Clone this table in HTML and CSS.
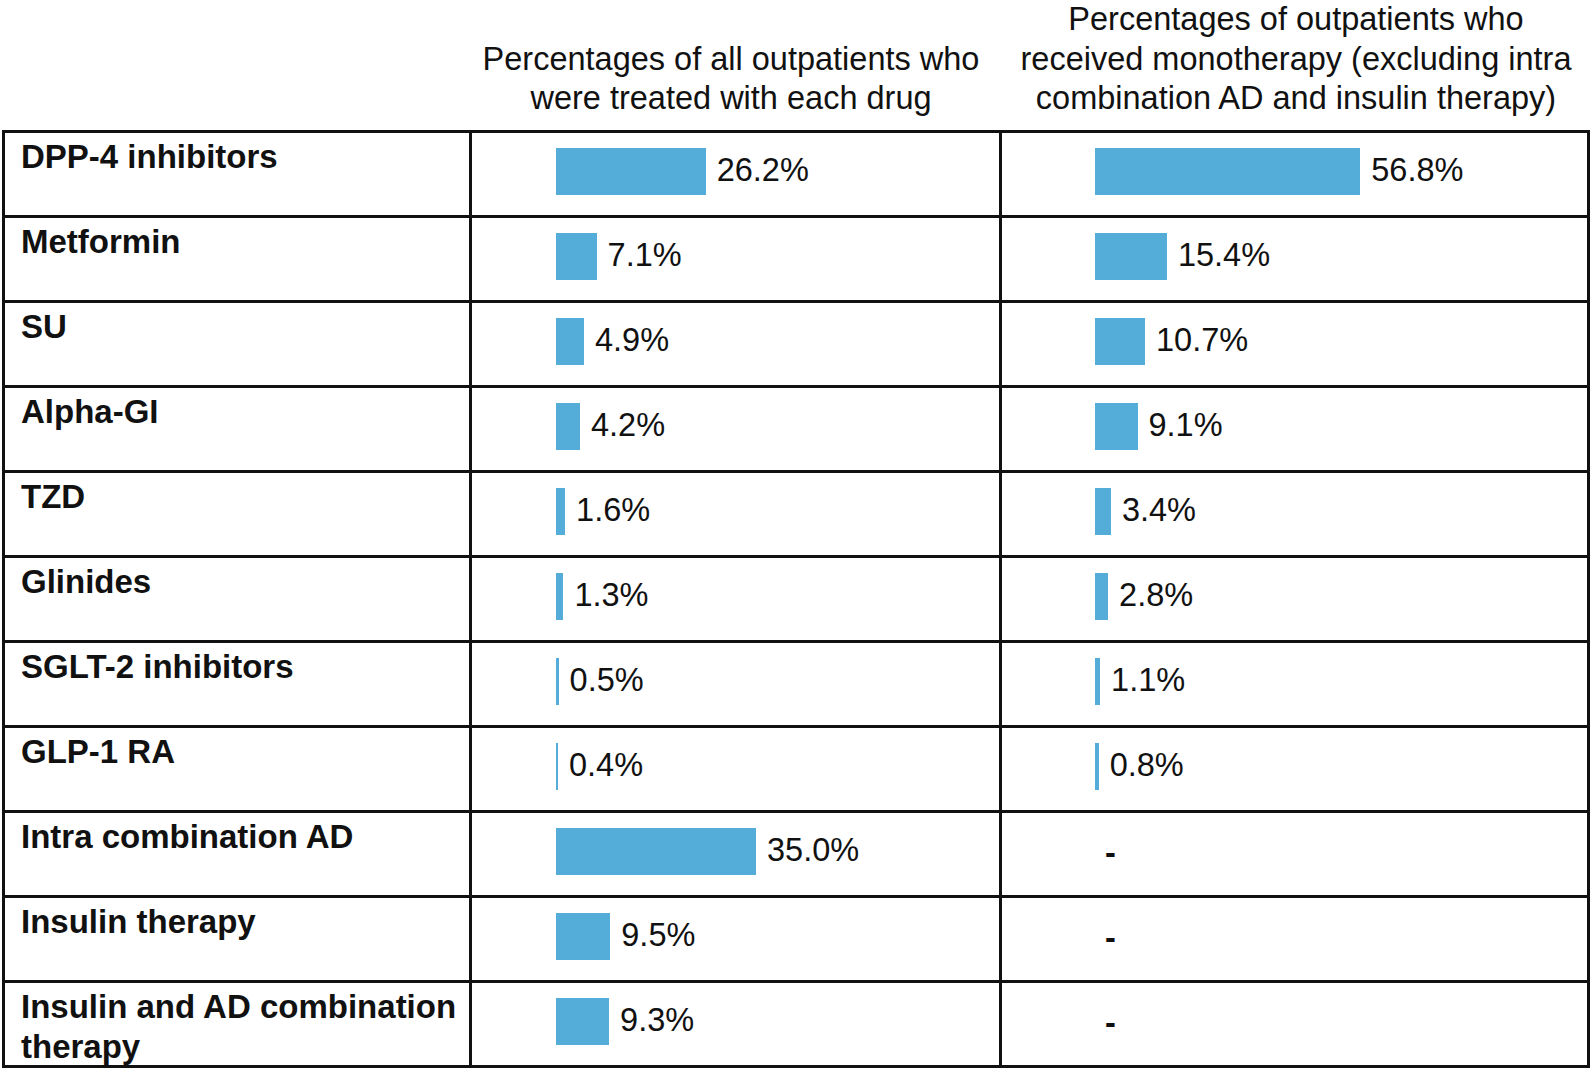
FILE: index.html
```html
<!DOCTYPE html>
<html lang="en">
<head>
<meta charset="utf-8">
<title>Antidiabetic drug usage</title>
<link rel="stylesheet" href="styles.css">
</head>
<body>
<div class="figure">
  <div class="head">
    <div class="hcell"></div>
    <div class="hcell h2">Percentages of all outpatients who<br>were treated with each drug</div>
    <div class="hcell h3">Percentages of outpatients who<br>received monotherapy (excluding intra<br>combination AD and insulin therapy)</div>
  </div>
  <div class="table">
    <div class="cell label">DPP-4 inhibitors</div>
    <div class="cell val c2"><span class="bar" style="width:149.7px"></span><span class="num">26.2%</span></div>
    <div class="cell val c3"><span class="bar" style="width:265.3px"></span><span class="num">56.8%</span></div>

    <div class="cell label">Metformin</div>
    <div class="cell val c2"><span class="bar" style="width:40.6px"></span><span class="num">7.1%</span></div>
    <div class="cell val c3"><span class="bar" style="width:71.9px"></span><span class="num">15.4%</span></div>

    <div class="cell label">SU</div>
    <div class="cell val c2"><span class="bar" style="width:28px"></span><span class="num">4.9%</span></div>
    <div class="cell val c3"><span class="bar" style="width:50px"></span><span class="num">10.7%</span></div>

    <div class="cell label">Alpha-GI</div>
    <div class="cell val c2"><span class="bar" style="width:24px"></span><span class="num">4.2%</span></div>
    <div class="cell val c3"><span class="bar" style="width:42.5px"></span><span class="num">9.1%</span></div>

    <div class="cell label">TZD</div>
    <div class="cell val c2"><span class="bar" style="width:9.1px"></span><span class="num">1.6%</span></div>
    <div class="cell val c3"><span class="bar" style="width:15.9px"></span><span class="num">3.4%</span></div>

    <div class="cell label">Glinides</div>
    <div class="cell val c2"><span class="bar" style="width:7.4px"></span><span class="num">1.3%</span></div>
    <div class="cell val c3"><span class="bar" style="width:13.1px"></span><span class="num">2.8%</span></div>

    <div class="cell label">SGLT-2 inhibitors</div>
    <div class="cell val c2"><span class="bar" style="width:2.6px"></span><span class="num">0.5%</span></div>
    <div class="cell val c3"><span class="bar" style="width:5.1px"></span><span class="num">1.1%</span></div>

    <div class="cell label">GLP-1 RA</div>
    <div class="cell val c2"><span class="bar" style="width:2px"></span><span class="num">0.4%</span></div>
    <div class="cell val c3"><span class="bar" style="width:3.7px"></span><span class="num">0.8%</span></div>

    <div class="cell label">Intra combination AD</div>
    <div class="cell val c2"><span class="bar" style="width:200px"></span><span class="num">35.0%</span></div>
    <div class="cell val c3 empty"><span class="dash">-</span></div>

    <div class="cell label">Insulin therapy</div>
    <div class="cell val c2"><span class="bar" style="width:54.3px"></span><span class="num">9.5%</span></div>
    <div class="cell val c3 empty"><span class="dash">-</span></div>

    <div class="cell label">Insulin and AD combination therapy</div>
    <div class="cell val c2"><span class="bar" style="width:53.1px"></span><span class="num">9.3%</span></div>
    <div class="cell val c3 empty"><span class="dash">-</span></div>
  </div>
</div>
</body>
</html>
```
FILE: styles.css
```css
* {
  box-sizing: border-box;
}

html, body {
  margin: 0;
  padding: 0;
  background: #ffffff;
}

body {
  font-family: "Liberation Sans", Arial, Helvetica, sans-serif;
  color: #111111;
  font-size: 32.5px;
  width: 1594px;
  height: 1069px;
  overflow: hidden;
}

.figure {
  padding-left: 2px;
}

.head {
  display: grid;
  grid-template-columns: 470px 530px 588px;
  height: 130px;
  align-items: end;
  padding-bottom: 11px;
}

.hcell {
  text-align: center;
  line-height: 39.6px;
  font-weight: normal;
}

.h2 {
  padding-right: 12px;
}

.table {
  display: grid;
  grid-template-columns: 467px 530px 588px;
  grid-auto-rows: 85px;
  width: 1588px;
  border-left: 3px solid #111111;
  border-top: 3px solid #111111;
}

.cell {
  border-right: 3px solid #111111;
  border-bottom: 3px solid #111111;
  line-height: 39.6px;
}

.label {
  font-weight: bold;
  font-size: 33px;
  padding: 4px 8px 0 16px;
}

.val {
  display: flex;
  align-items: center;
  padding-bottom: 6px;
}

.c2 {
  padding-left: 84px;
}

.c3 {
  padding-left: 93px;
}

.bar {
  display: block;
  height: 47px;
  background: #54acd8;
  flex: none;
}

.num {
  margin-left: 11px;
  white-space: nowrap;
}

.empty {
  padding-left: 103px;
  padding-bottom: 0;
}

.dash {
  font-weight: bold;
}
```
